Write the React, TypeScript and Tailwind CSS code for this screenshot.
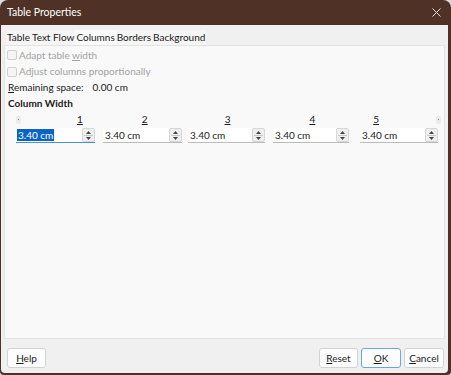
import React from 'react'

const widths = ['3.40 cm', '3.40 cm', '3.40 cm', '3.40 cm', '3.40 cm']

function Checkbox({ label, hotkey }: { label: string; hotkey?: number }) {
  return (
    <div className="flex items-center h-full">
      <div className="w-[10px] h-[10px] rounded-[2px] border border-[#cfcfcf] bg-[#f5f5f5] mr-[2px]" />
      <span className="text-[#a3a3a3]">
        {hotkey !== undefined ? (
          <>
            {label.slice(0, hotkey)}
            <span className="underline">{label[hotkey]}</span>
            {label.slice(hotkey + 1)}
          </>
        ) : (
          label
        )}
      </span>
    </div>
  )
}

function Spinner() {
  return (
    <div className="w-[13px] h-[14px] border border-[#d6d6d6] bg-[#efefef] rounded-[2px] flex flex-col items-center justify-center gap-[1px]">
      <svg width="5" height="3" viewBox="0 0 5 3">
        <path d="M2.5 0 L5 3 L0 3 Z" fill="#444" />
      </svg>
      <div className="w-[9px] h-px bg-[#c8c8c8]" />
      <svg width="5" height="3" viewBox="0 0 5 3">
        <path d="M0 0 L5 0 L2.5 3 Z" fill="#444" />
      </svg>
    </div>
  )
}

function SpinField({ value, focused, width }: { value: string; focused?: boolean; width: string }) {
  return (
    <div
      className={
        'flex items-center h-[15px] bg-white border-b ' +
        width +
        (focused ? ' border-[#4a90d9]' : ' border-[#bcbcbc]')
      }
    >
      <div className="flex-1 pl-[1px]">
        {focused ? <span className="bg-[#0a64c8] text-white px-px">{value}</span> : <span className="pl-[1px]">{value}</span>}
      </div>
      <Spinner />
    </div>
  )
}

function Nub() {
  return (
    <div className="w-[5px] h-[8px] rounded-[2px] bg-[#ebebeb] flex items-center justify-center">
      <div className="w-px h-px bg-[#888]" />
    </div>
  )
}

function Button({ label, hot, primary, w }: { label: string; hot: number; primary?: boolean; w: string }) {
  return (
    <button
      className={
        'h-[20px] rounded-[3px] bg-[#fdfdfd] border text-[10px] text-[#1a1a1a] ' +
        w +
        (primary ? ' border-[#6aa7e0]' : ' border-[#d3d3d3]')
      }
    >
      {label.slice(0, hot)}
      <span className="underline">{label[hot]}</span>
      {label.slice(hot + 1)}
    </button>
  )
}

export default function App() {
  return (
    <div className="w-[451px] h-[375px] bg-[#dcdcdc] font-['Lato',sans-serif] text-[10px] text-[#1a1a1a]">
      <div className="w-full h-full flex flex-col bg-[#4f3125] rounded-t-[8px] rounded-b-[4px]">
        {/* Title bar */}
        <div className="h-[25px] flex items-center justify-between pl-[7px] pr-[10px] text-white text-[10.5px]">
          <span>Table Properties</span>
          <svg width="9" height="9" viewBox="0 0 9 9">
            <path d="M0.5 0.5 L8.5 8.5 M8.5 0.5 L0.5 8.5" stroke="#e8e0dc" strokeWidth="1" />
          </svg>
        </div>

        {/* Body */}
        <div className="flex-1 flex flex-col bg-[#f0f0f0] ml-px mr-[3px] mb-[2px] rounded-b-[4px]">
          {/* Tabs */}
          <div className="h-[20px] flex items-end pl-[5px]">
            <div className="flex h-[15px] items-center bg-[#f5f5f5]">
              <span className="px-[1px]">Table</span>
              <span className="px-[1px]">Text Flow</span>
              <span className="px-[1px] h-full flex items-center bg-[#fbfbfb]">Columns</span>
              <span className="px-[1px]">Borders</span>
              <span className="px-[1px]">Background</span>
            </div>
          </div>

          {/* Panel */}
          <div className="h-[294px] mx-[3px] bg-[#f9f9f9] border border-[#e3e3e3] pl-[2px] pt-[1px] flex flex-col">
            <div className="h-[16px]">
              <Checkbox label="Adapt table width" hotkey={12} />
            </div>
            <div className="h-[17px]">
              <Checkbox label="Adjust columns proportionally" />
            </div>
            <div className="h-[15px] flex items-center pl-[1px]">
              <span>
                <span className="underline">R</span>emaining space:
              </span>
              <span className="ml-[9px]">0.00 cm</span>
            </div>
            <div className="h-[16px] flex items-center pl-[1px] font-bold">Column Width</div>

            {/* Column headers */}
            <div className="h-[17px] flex items-center pl-[9px] pr-[3px]">
              <Nub />
              <div className="flex-1 flex">
                <span className="underline ml-[56px]">1</span>
                <span className="underline ml-[59px]">2</span>
                <span className="underline ml-[77px]">3</span>
                <span className="underline ml-[79px]">4</span>
                <span className="underline ml-[58px]">5</span>
              </div>
              <Nub />
            </div>

            {/* Fields */}
            <div className="flex items-center pl-[9px]">
              <SpinField value={widths[0]} focused width="w-[79px]" />
              <div className="w-[8px]" />
              <SpinField value={widths[1]} width="w-[79px]" />
              <div className="w-[6px]" />
              <SpinField value={widths[2]} width="w-[77px]" />
              <div className="w-[8px]" />
              <SpinField value={widths[3]} width="w-[76px]" />
              <div className="w-[11px]" />
              <SpinField value={widths[4]} width="w-[78px]" />
            </div>
          </div>

          {/* Footer */}
          <div className="flex-1 flex items-start justify-between pt-[9px] pl-[6px] pr-[4px]">
            <Button label="Help" hot={0} w="w-[39px]" />
            <div className="flex gap-[3px]">
              <Button label="Reset" hot={0} w="w-[39px]" />
              <Button label="OK" hot={0} primary w="w-[40px]" />
              <Button label="Cancel" hot={0} w="w-[40px]" />
            </div>
          </div>
        </div>
      </div>
    </div>
  )
}
